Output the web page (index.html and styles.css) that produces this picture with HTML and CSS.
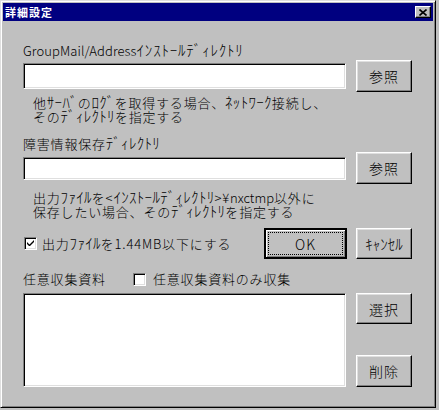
FILE: index.html
```html
<!DOCTYPE html>
<html lang="ja">
<head>
<meta charset="utf-8">
<title>詳細設定</title>
<link rel="stylesheet" href="styles.css">
</head>
<body>
<div class="window">
  <div class="titlebar">
    <span class="title">詳細設定</span>
    <span class="close"><svg width="8" height="7" viewBox="0 0 8 7"><path d="M0.5 0.5 L7.5 6.5 M7.5 0.5 L0.5 6.5" stroke="#000" stroke-width="1.6" fill="none"/></svg></span>
  </div>
  <div class="content">
    <div class="label l1">GroupMail/Address<span class="hk">ｲﾝｽﾄｰﾙﾃﾞｨﾚｸﾄﾘ</span></div>
    <div class="row r1">
      <div class="field f1"></div>
      <div class="btn">参照</div>
    </div>
    <div class="hint h1">
      <div class="line">他<span class="hk">ｻｰﾊﾞ</span>の<span class="hk">ﾛｸﾞ</span>を取得する場合、<span class="hk">ﾈｯﾄﾜｰｸ</span>接続し、</div>
      <div class="line">その<span class="hk">ﾃﾞｨﾚｸﾄﾘ</span>を指定する</div>
    </div>
    <div class="label l2">障害情報保存<span class="hk">ﾃﾞｨﾚｸﾄﾘ</span></div>
    <div class="row r2">
      <div class="field f2"></div>
      <div class="btn">参照</div>
    </div>
    <div class="hint h2">
      <div class="line">出力<span class="hk">ﾌｧｲﾙ</span>を&lt;<span class="hk">ｲﾝｽﾄｰﾙﾃﾞｨﾚｸﾄﾘ</span>&gt;¥<span class="latin">nxctmp</span>以外に</div>
      <div class="line">保存したい場合、その<span class="hk">ﾃﾞｨﾚｸﾄﾘ</span>を指定する</div>
    </div>
    <div class="row r3">
      <div class="check-label">
        <span class="checkbox checked"><svg width="7" height="7" viewBox="0 0 7 7"><path d="M0 2 L0 4 L2 6 L3 6 L7 2 L7 0 L2.5 4.5 Z" fill="#000"/></svg></span>
        <span>出力<span class="hk">ﾌｧｲﾙ</span>を1.44MB以下にする</span>
      </div>
      <div class="btn default">OK</div>
      <div class="btn"><span class="hk">ｷｬﾝｾﾙ</span></div>
    </div>
    <div class="row r4">
      <span class="label list-label">任意収集資料</span>
      <span class="checkbox"></span>
      <span>任意収集資料のみ収集</span>
    </div>
    <div class="row r5">
      <div class="listbox"></div>
      <div class="btn-col">
        <div class="btn">選択</div>
        <div class="btn">削除</div>
      </div>
    </div>
  </div>
</div>
</body>
</html>
```

FILE: styles.css
```css
html, body {
  margin: 0;
  background: #c0c0c0;
}

body {
  font-family: "Noto Sans CJK JP", "Liberation Sans", sans-serif;
  color: #000;
}

.window {
  width: 436px;
  height: 408px;
  box-sizing: border-box;
  border: 1px solid;
  border-color: #dfdfdf #000 #000 #dfdfdf;
  box-shadow: inset 1px 1px #fff, inset -1px -1px #808080;
  padding: 2px;
  background: #c0c0c0;
}

.titlebar {
  height: 18px;
  background: #000080;
  color: #fff;
  display: flex;
  align-items: center;
  justify-content: space-between;
  padding: 0 2px 0 2px;
}

.title {
  font-size: 11px;
  font-weight: bold;
  line-height: 18px;
  letter-spacing: 1px;
}

.close {
  width: 16px;
  height: 12px;
  box-sizing: border-box;
  background: #c0c0c0;
  border: 1px solid;
  border-color: #fff #000 #000 #fff;
  box-shadow: inset -1px -1px #808080;
  display: flex;
  align-items: center;
  justify-content: center;
}

.close svg {
  display: block;
}

.content {
  padding-left: 20px;
  font-size: 13px;
  font-weight: 300;
  line-height: 14px;
  letter-spacing: 0.8px;
  width: 389px;
}

.hk {
  font-size: 15px;
  letter-spacing: 0.3px;
}

.latin {
  letter-spacing: 0;
}

.label,
.line {
  white-space: nowrap;
  height: 14px;
}

.l1 {
  margin-top: 22px;
  letter-spacing: 0.1px;
}

.l1 .hk {
  letter-spacing: 0.8px;
}

.row {
  display: flex;
  align-items: center;
  gap: 10px;
}

.r1 {
  margin-top: 3px;
  height: 32px;
}

.r2 {
  margin-top: 2px;
  height: 32px;
}

.field {
  width: 323px;
  flex: none;
  box-sizing: border-box;
  background: #fff;
  border: 1px solid;
  border-color: #808080 #fff #fff #808080;
  box-shadow: inset 1px 1px #000, inset -1px -1px #dfdfdf;
}

.f1 {
  height: 26px;
}

.f2 {
  height: 23px;
}

.btn {
  width: 56px;
  height: 32px;
  flex: none;
  box-sizing: border-box;
  border: 1px solid;
  border-color: #fff #000 #000 #fff;
  box-shadow: inset -1px -1px #808080, inset 1px 1px #dfdfdf;
  display: flex;
  align-items: center;
  justify-content: center;
  font-size: 14px;
  letter-spacing: 1px;
}

.btn .hk {
  font-size: 15px;
  letter-spacing: 0;
}

.hint {
  padding-left: 10px;
}

.h1 {
  margin-top: 3px;
}

.l2 {
  margin-top: 13px;
}

.h2 {
  margin-top: 6px;
}

.r3 {
  margin-top: 10px;
  height: 31px;
  gap: 9px;
}

.r3 .btn {
  height: 31px;
}

.check-label {
  flex: 1;
  display: flex;
  align-items: center;
  gap: 5px;
  padding-left: 1px;
}

.checkbox {
  width: 13px;
  height: 13px;
  flex: none;
  box-sizing: border-box;
  background: #fff;
  border: 1px solid;
  border-color: #808080 #fff #fff #808080;
  box-shadow: inset 1px 1px #000, inset -1px -1px #dfdfdf;
  display: flex;
  align-items: center;
  justify-content: center;
}

.checkbox svg {
  display: block;
}

.btn.default {
  width: 83px;
  border: 2px solid #000;
  box-shadow: inset 1px 1px #fff, inset -1px -1px #808080;
  outline: 1px dotted #000;
  outline-offset: -5px;
}

.r4 {
  margin-top: 13px;
  height: 14px;
  gap: 7px;
}

.list-label {
  width: 103px;
  flex: none;
}

.r5 {
  margin-top: 7px;
  height: 94px;
  align-items: stretch;
}

.listbox {
  width: 323px;
  flex: none;
  box-sizing: border-box;
  background: #fff;
  border: 1px solid;
  border-color: #808080 #fff #fff #808080;
  box-shadow: inset 1px 1px #000, inset -1px -1px #dfdfdf;
}

.btn-col {
  display: flex;
  flex-direction: column;
  justify-content: space-between;
}

.btn-col .btn:first-child {
  height: 31px;
}
```
